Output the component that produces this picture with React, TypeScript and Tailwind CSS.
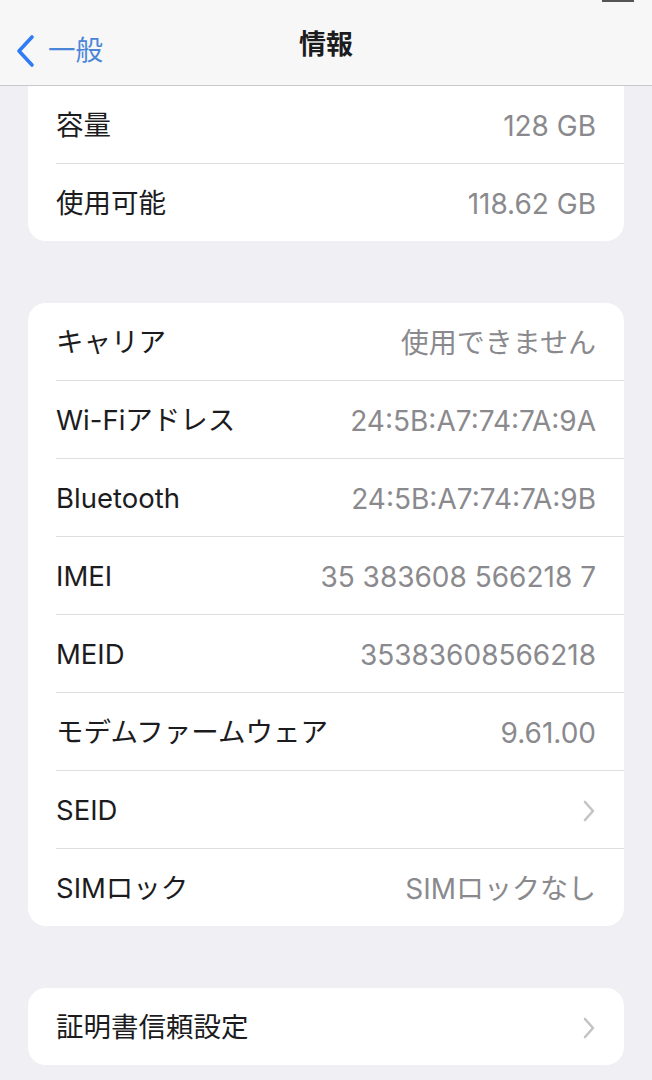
import { Fragment } from "react";

type Row = { label: string; value?: string; chevron?: boolean };

const storage: Row[] = [
  { label: "容量", value: "128 GB" },
  { label: "使用可能", value: "118.62 GB" }
];

const network: Row[] = [
  { label: "キャリア", value: "使用できません" },
  { label: "Wi-Fiアドレス", value: "24:5B:A7:74:7A:9A" },
  { label: "Bluetooth", value: "24:5B:A7:74:7A:9B" },
  { label: "IMEI", value: "35 383608 566218 7" },
  { label: "MEID", value: "35383608566218" },
  { label: "モデムファームウェア", value: "9.61.00" },
  { label: "SEID", chevron: true },
  { label: "SIMロック", value: "SIMロックなし" }
];

const certs: Row[] = [{ label: "証明書信頼設定", chevron: true }];

function Chevron() {
  return (
    <svg width="14" height="24" viewBox="0 0 14 24" fill="none">
      <path
        d="M3 3l8 9-8 9"
        stroke="#c4c4c7"
        strokeWidth="2.6"
        strokeLinecap="round"
        strokeLinejoin="round"
      />
    </svg>
  );
}

function Group({ rows, cutTop }: { rows: Row[]; cutTop?: boolean }) {
  return (
    <div
      className={
        cutTop
          ? "mx-[28px] rounded-b-[18px] bg-white"
          : "mx-[28px] rounded-[18px] bg-white"
      }
    >
      {rows.map((row, i) => (
        <Fragment key={row.label}>
          {i > 0 && <div className="ml-[28px] h-px bg-[#dedee2]" />}
          <div className="flex h-[77px] items-center justify-between px-[28px] pt-[3px]">
            <span className="text-[27.5px] text-[#1c1c1e]">{row.label}</span>
            {row.chevron ? (
              <Chevron />
            ) : (
              <span className="text-[28px] text-[#8a8a8e]">{row.value}</span>
            )}
          </div>
        </Fragment>
      ))}
    </div>
  );
}

export default function App() {
  return (
    <div
      className="flex h-[1080px] w-[652px] flex-col overflow-hidden bg-[#efeff4]"
      style={{ fontFamily: '"Inter", "Noto Sans CJK JP", sans-serif' }}
    >
      <div className="relative flex h-[86px] shrink-0 items-center justify-center border-b border-[#c9c9cc] bg-[#f7f7f7] pt-[6px]">
        <div className="absolute top-0 right-[18px] h-[2px] w-[32px] bg-[#555]" />
        <div className="absolute left-[14px] top-[30px] flex items-center gap-[12px]">
          <svg width="22" height="36" viewBox="0 0 22 36" fill="none">
            <path
              d="M18 4L5 18l13 14"
              stroke="#2f7cf6"
              strokeWidth="3.6"
              strokeLinecap="round"
              strokeLinejoin="round"
            />
          </svg>
          <span className="text-[27.5px] text-[#4a86d8]">一般</span>
        </div>
        <span className="text-[27px] font-bold text-[#1c1c1e]">情報</span>
      </div>
      <Group rows={storage} cutTop />
      <div className="h-[62px] shrink-0" />
      <Group rows={network} />
      <div className="h-[62px] shrink-0" />
      <Group rows={certs} />
    </div>
  );
}
